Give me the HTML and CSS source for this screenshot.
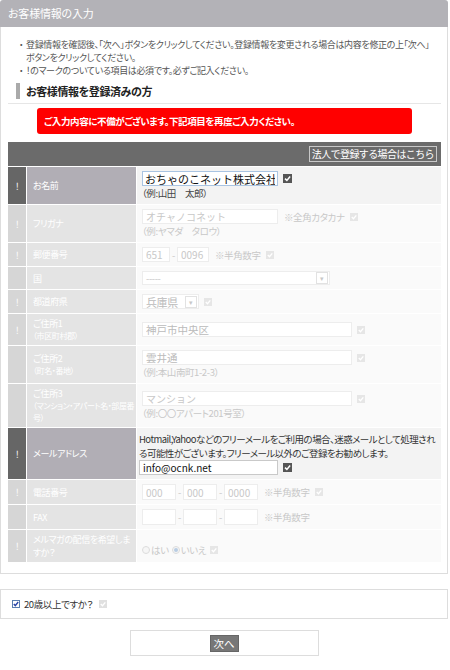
FILE: index.html
```html
<!DOCTYPE html>
<html lang="ja">
<head>
    <meta charset="UTF-8">
    <title>お客様情報の入力</title>
    <link rel="stylesheet" href="styles.css">
</head>
<body>
<div class="page">
    <div class="title">お客様情報の入力</div>

    <div class="panel">
        <ul class="notes">
            <li><span>登録情報を確認後、「次へ」ボタンをクリックしてください。登録情報を変更される場合は内容を修正の上「次へ」<br>ボタンをクリックしてください。</span></li>
            <li><span>！のマークのついている項目は必須です。必ずご記入ください。</span></li>
        </ul>

        <div class="sub-head"><h2>お客様情報を登録済みの方</h2></div>

        <div class="error">ご入力内容に不備がございます。下記項目を再度ご入力ください。</div>

        <table class="form">
            <colgroup><col class="c-mark"><col class="c-label"><col></colgroup>
            <tr class="top">
                <td colspan="3"><button class="corp" type="button">法人で登録する場合はこちら</button></td>
            </tr>
            <tr class="req">
                <td class="mark">!</td>
                <td class="label">お名前</td>
                <td class="field">
                    <div class="line">
                        <input class="txt focus w136" type="text" value="おちゃのこネット株式会社">
                        <svg class="ok" width="9" height="9" viewBox="0 0 9 9"><rect width="9" height="9" fill="#555"/><path d="M2 4.6 L3.9 6.4 L7.1 2.6" stroke="#fff" stroke-width="1.5" fill="none"/></svg>
                    </div>
                    <div class="ex">（例:山田　太郎）</div>
                </td>
            </tr>
            <tr class="off">
                <td class="mark">!</td>
                <td class="label">フリガナ</td>
                <td class="field">
                    <div class="line">
                        <input class="txt w136" type="text" value="オチャノコネット">
                        <span class="hint">※全角カタカナ</span>
                        <svg class="ok" width="8" height="8" viewBox="0 0 9 9"><rect width="9" height="9" fill="#e6e6e6"/><path d="M2 4.6 L3.9 6.4 L7.1 2.6" stroke="#fff" stroke-width="1.5" fill="none"/></svg>
                    </div>
                    <div class="ex">（例:ヤマダ　タロウ）</div>
                </td>
            </tr>
            <tr class="off">
                <td class="mark">!</td>
                <td class="label">郵便番号</td>
                <td class="field">
                    <div class="line">
                        <input class="txt w28" type="text" value="651"><span class="dash">-</span><input class="txt w32" type="text" value="0096">
                        <span class="hint">※半角数字</span>
                        <svg class="ok" width="8" height="8" viewBox="0 0 9 9"><rect width="9" height="9" fill="#e6e6e6"/><path d="M2 4.6 L3.9 6.4 L7.1 2.6" stroke="#fff" stroke-width="1.5" fill="none"/></svg>
                    </div>
                </td>
            </tr>
            <tr class="off">
                <td class="mark"></td>
                <td class="label">国</td>
                <td class="field">
                    <div class="line short">
                        <span class="select w188"><span class="val">-----</span><span class="arrow">▾</span></span>
                    </div>
                </td>
            </tr>
            <tr class="off">
                <td class="mark">!</td>
                <td class="label">都道府県</td>
                <td class="field">
                    <div class="line">
                        <span class="select w57"><span class="val dark">兵庫県</span><span class="arrow">▾</span></span>
                        <svg class="ok" width="8" height="8" viewBox="0 0 9 9"><rect width="9" height="9" fill="#e6e6e6"/><path d="M2 4.6 L3.9 6.4 L7.1 2.6" stroke="#fff" stroke-width="1.5" fill="none"/></svg>
                    </div>
                </td>
            </tr>
            <tr class="off">
                <td class="mark">!</td>
                <td class="label">ご住所1<div class="sub">（市区町村郡）</div></td>
                <td class="field">
                    <div class="line">
                        <input class="txt dark w210" type="text" value="神戸市中央区">
                        <svg class="ok" width="8" height="8" viewBox="0 0 9 9"><rect width="9" height="9" fill="#e6e6e6"/><path d="M2 4.6 L3.9 6.4 L7.1 2.6" stroke="#fff" stroke-width="1.5" fill="none"/></svg>
                    </div>
                </td>
            </tr>
            <tr class="off">
                <td class="mark"></td>
                <td class="label">ご住所2<div class="sub">（町名・番地）</div></td>
                <td class="field">
                    <div class="line">
                        <input class="txt dark w210" type="text" value="雲井通">
                        <svg class="ok" width="8" height="8" viewBox="0 0 9 9"><rect width="9" height="9" fill="#e6e6e6"/><path d="M2 4.6 L3.9 6.4 L7.1 2.6" stroke="#fff" stroke-width="1.5" fill="none"/></svg>
                    </div>
                    <div class="ex">（例:本山南町1-2-3）</div>
                </td>
            </tr>
            <tr class="off">
                <td class="mark"></td>
                <td class="label">ご住所3<div class="sub">（マンション・アパート名・部屋番<br>号）</div></td>
                <td class="field">
                    <div class="line">
                        <input class="txt w210" type="text" value="マンション">
                        <svg class="ok" width="8" height="8" viewBox="0 0 9 9"><rect width="9" height="9" fill="#e6e6e6"/><path d="M2 4.6 L3.9 6.4 L7.1 2.6" stroke="#fff" stroke-width="1.5" fill="none"/></svg>
                    </div>
                    <div class="ex">（例:〇〇アパート201号室）</div>
                </td>
            </tr>
            <tr class="req">
                <td class="mark">!</td>
                <td class="label">メールアドレス</td>
                <td class="field mail">
                    <p class="mail-note">Hotmail,Yahooなどのフリーメールをご利用の場合、迷惑メールとして処理され<br>る可能性がございます。フリーメール以外のご登録をお勧めします。</p>
                    <div class="line">
                        <input class="txt w139" type="text" value="info@ocnk.net">
                        <svg class="ok" width="9" height="9" viewBox="0 0 9 9"><rect width="9" height="9" fill="#555"/><path d="M2 4.6 L3.9 6.4 L7.1 2.6" stroke="#fff" stroke-width="1.5" fill="none"/></svg>
                    </div>
                </td>
            </tr>
            <tr class="off">
                <td class="mark">!</td>
                <td class="label">電話番号</td>
                <td class="field">
                    <div class="line tall">
                        <input class="txt w34" type="text" value="000"><span class="dash">-</span><input class="txt w34" type="text" value="000"><span class="dash">-</span><input class="txt w34" type="text" value="0000">
                        <span class="hint">※半角数字</span>
                        <svg class="ok" width="8" height="8" viewBox="0 0 9 9"><rect width="9" height="9" fill="#e6e6e6"/><path d="M2 4.6 L3.9 6.4 L7.1 2.6" stroke="#fff" stroke-width="1.5" fill="none"/></svg>
                    </div>
                </td>
            </tr>
            <tr class="off">
                <td class="mark"></td>
                <td class="label">FAX</td>
                <td class="field">
                    <div class="line tall">
                        <input class="txt w34" type="text" value=""><span class="dash">-</span><input class="txt w34" type="text" value=""><span class="dash">-</span><input class="txt w34" type="text" value="">
                        <span class="hint">※半角数字</span>
                    </div>
                </td>
            </tr>
            <tr class="off">
                <td class="mark">!</td>
                <td class="label">メルマガの配信を希望しま<br>すか？</td>
                <td class="field">
                    <div class="line radios">
                        <svg width="8" height="8" viewBox="0 0 8 8"><circle cx="4" cy="4" r="3.5" fill="#f6f6f6" stroke="#dcdcdc"/></svg><span>はい</span>
                        <svg width="8" height="8" viewBox="0 0 8 8"><circle cx="4" cy="4" r="3.5" fill="#f6f6f6" stroke="#dcdcdc"/><circle cx="4" cy="4" r="2" fill="#b9cde3"/></svg><span>いいえ</span>
                        <svg class="ok" width="8" height="8" viewBox="0 0 9 9"><rect width="9" height="9" fill="#e6e6e6"/><path d="M2 4.6 L3.9 6.4 L7.1 2.6" stroke="#fff" stroke-width="1.5" fill="none"/></svg>
                    </div>
                </td>
            </tr>
        </table>
    </div>

    <div class="agree">
        <svg width="8" height="8" viewBox="0 0 8 8"><rect x="0.5" y="0.5" width="7" height="7" fill="#fff" stroke="#5a7fb0"/><path d="M1.8 4 L3.3 5.6 L6.2 2" stroke="#2a44a8" stroke-width="1.4" fill="none"/></svg>
        <span>20歳以上ですか？</span>
        <svg class="ok" width="8" height="8" viewBox="0 0 9 9"><rect width="9" height="9" fill="#e0e0e0"/><path d="M2 4.6 L3.9 6.4 L7.1 2.6" stroke="#fff" stroke-width="1.5" fill="none"/></svg>
    </div>

    <div class="actions">
        <button class="next" type="button">次へ</button>
    </div>
</div>
</body>
</html>
```

FILE: styles.css
```css
body {
    margin: 0;
    font-family: "Noto Sans CJK JP", "Noto Sans", sans-serif;
    font-size: 9.5px;
    letter-spacing: -0.4px;
    color: #444;
    background-color: #fff;
    font-feature-settings: "palt";
}

.page {
    width: 448px;
}

.title {
    height: 27px;
    line-height: 27px;
    padding-left: 8px;
    background-color: #b3b2b7;
    color: #fff;
    font-size: 11px;
    letter-spacing: -0.2px;
    border-radius: 3px 3px 0 0;
}

.panel {
    border: 1px solid #ddd;
    border-top: none;
    padding: 11px 6px 10px 7px;
}

/* notes at the top */
.notes {
    margin: 0;
    padding: 0;
    list-style: none;
    color: #555;
    font-size: 9px;
    line-height: 13px;
    letter-spacing: -0.35px;
}

.notes li {
    display: flex;
    white-space: nowrap;
}

.notes li:before {
    content: '・';
    flex: none;
    width: 10px;
    margin-left: 8px;
    font-feature-settings: normal;
    text-align: center;
}

.sub-head {
    margin-top: 6px;
    padding: 0 0 4px 8px;
    border-bottom: 1px solid #e6e6e6;
}

.sub-head h2 {
    margin: 0;
    padding-left: 6px;
    border-left: 4px solid #aaa;
    font-size: 11px;
    line-height: 16px;
    color: #222;
}

.error {
    width: 368px;
    height: 26px;
    line-height: 26px;
    margin: 4px 0 0 29px;
    padding-left: 7px;
    background-color: #f00;
    color: #fff;
    font-weight: bold;
    border-radius: 3px;
}

/* form table */
.form {
    width: 433px;
    margin-top: 8px;
    border-collapse: separate;
    border-spacing: 0;
    table-layout: fixed;
}

.c-mark { width: 19px; }
.c-label { width: 110px; }

.form td {
    border-bottom: 1px solid #fff;
    padding: 0;
    vertical-align: middle;
}

.form .top td {
    background-color: #6b6b6b;
    padding: 4px 4px 4px 0;
    text-align: right;
    line-height: 16px;
}

.corp {
    height: 16px;
    padding: 0 2px;
    border: 1px solid #c8c8c8;
    background-color: #6b6b6b;
    color: #fff;
    font-family: inherit;
    font-size: 10px;
    letter-spacing: -0.6px;
    line-height: 14px;
    vertical-align: top;
    cursor: pointer;
}

.mark {
    border-right: 1px solid #fff;
    color: #fff;
    text-align: center;
}

.label {
    border-right: 1px solid #fff;
    padding: 3px 2px 3px 6px !important;
    color: #fff;
    font-size: 9px;
    line-height: 13px;
    letter-spacing: -0.4px;
    white-space: nowrap;
    overflow: hidden;
}

.label .sub {
    font-size: 8px;
    line-height: 12px;
}

.field {
    padding: 4px 5px !important;
}

.req .mark { background-color: #666; }
.req .label { background-color: #b1aeb5; }
.req .field { background-color: #f3f3f3; }

.off .mark { background-color: #d6d6d6; }
.off .label { background-color: #e4e4e4; }
.off .field { background-color: #fafafa; color: #c8c8c8; }

.line {
    display: flex;
    align-items: center;
    height: 15px;
}

.line.short { height: 14px; }
.line.tall { height: 16px; }

.txt {
    box-sizing: border-box;
    height: 15px;
    padding: 0 3px;
    border: 1px solid #ededed;
    background-color: #fff;
    color: #c8c8c8;
    font-family: inherit;
    font-size: 10px;
    font-feature-settings: normal;
    outline: none;
}

.line.tall .txt { height: 16px; }
.txt.dark { color: #bbb; font-size: 10.5px; }

.req .txt {
    border-color: #c9c9c9;
    color: #111;
}

.req .txt.focus {
    border-color: #a9c4e2;
    font-size: 11px;
    padding: 0 2px;
}

.w28 { width: 28px; }
.w32 { width: 32px; }
.w34 { width: 34px; }
.w136 { width: 136px; }
.w139 { width: 139px; }
.w210 { width: 210px; }

.dash {
    width: 7px;
    text-align: center;
}

.hint {
    margin-left: 6px;
}

.ok {
    margin-left: 5px;
}

.ex {
    line-height: 14px;
}

.req .ex { color: #444; }

.select {
    box-sizing: border-box;
    display: flex;
    align-items: center;
    height: 100%;
    border: 1px solid #ededed;
    background-color: #fff;
}

.w188 { width: 188px; }
.w57 { width: 57px; }

.select .val {
    flex: 1;
    padding-left: 3px;
    line-height: 12px;
}

.select .val.dark {
    color: #bbb;
    font-size: 11px;
}

.select .arrow {
    box-sizing: border-box;
    width: 12px;
    height: 12px;
    margin-right: 1px;
    border: 1px solid #e2e2e2;
    font-size: 7px;
    line-height: 10px;
    text-align: center;
}

.mail {
    padding-left: 2px !important;
    color: #333;
}

.mail-note {
    margin: 0;
    line-height: 14px;
    letter-spacing: -0.55px;
    white-space: nowrap;
}

.radios {
    gap: 1px;
    margin-top: 8px;
}

.radios span {
    margin-right: 2px;
}

.radios .ok {
    margin-left: 1px;
}

/* bottom */
.agree {
    box-sizing: border-box;
    display: flex;
    align-items: center;
    gap: 4px;
    height: 30px;
    margin-top: 15px;
    padding-left: 11px;
    border: 1px solid #ddd;
    color: #333;
}

.agree .ok {
    margin-left: 2px;
}

.actions {
    box-sizing: border-box;
    display: flex;
    justify-content: center;
    align-items: center;
    width: 189px;
    height: 26px;
    margin: 11px auto 0;
    border: 1px solid #ddd;
}

.next {
    height: 17px;
    padding: 0 3px;
    border: 1px solid #666;
    background-color: #777;
    color: #fff;
    font-family: inherit;
    font-size: 10.5px;
    line-height: 15px;
    cursor: pointer;
}
```
